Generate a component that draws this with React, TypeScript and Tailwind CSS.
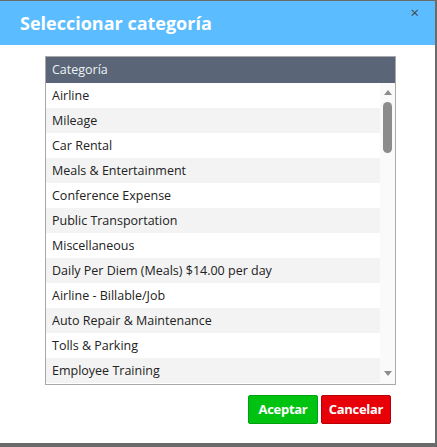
import React from "react";

const items = [
  "Airline",
  "Mileage",
  "Car Rental",
  "Meals & Entertainment",
  "Conference Expense",
  "Public Transportation",
  "Miscellaneous",
  "Daily Per Diem (Meals) $14.00 per day",
  "Airline - Billable/Job",
  "Auto Repair & Maintenance",
  "Tolls & Parking",
  "Employee Training",
];

export default function App() {
  return (
    <div
      className="w-[437px] h-[447px] bg-[#6b6b6b] pt-px overflow-hidden"
      style={{ fontFamily: '"Open Sans", "Noto Sans", sans-serif' }}
    >
      <div className="w-[435px] h-[442px] bg-white flex flex-col">
        <div className="h-[44px] bg-[#5bbdff] relative flex items-center pl-[20px]">
          <span className="text-white font-bold text-[18px] leading-none">
            Seleccionar categoría
          </span>
          <span className="absolute right-[16px] top-[4px] text-[#444] text-[15px] leading-none">
            ×
          </span>
        </div>
        <div className="pl-[45px] pt-[11px]">
          <div className="w-[351px] h-[329px] border border-[#a9a9a9] flex flex-col">
            <div className="h-[26px] bg-[#5a6577] text-[#eef2f6] text-[12.5px] flex items-center pl-[6px]">
              Categoría
            </div>
            <div className="flex flex-1">
              <div className="flex-1 flex flex-col">
                {items.map((it, i) => (
                  <div
                    key={it}
                    className={`h-[25px] shrink-0 flex items-center pl-[6px] pt-[2px] text-[12.5px] text-[#222] ${
                      i % 2 === 1 ? "bg-[#f3f3f3]" : "bg-white"
                    }`}
                  >
                    {it}
                  </div>
                ))}
              </div>
              <div className="w-[15px] bg-[#fafafa] flex flex-col items-center pt-[7px] pb-[4px]">
                <div className="w-0 h-0 border-l-[4.5px] border-r-[4.5px] border-b-[5px] border-l-transparent border-r-transparent border-b-[#8c8c8c]" />
                <div className="w-[9px] h-[51px] mt-[7px] rounded-full bg-[#8c8c8c]" />
                <div className="flex-1" />
                <div className="w-0 h-0 mb-[4px] border-l-[4.5px] border-r-[4.5px] border-t-[5px] border-l-transparent border-r-transparent border-t-[#8c8c8c]" />
              </div>
            </div>
          </div>
        </div>
        <div className="flex justify-end gap-[3px] pr-[44px] pt-[10px]">
          <button className="w-[70px] h-[29px] bg-[#00c311] border border-[#00a00e] rounded-[2px] text-white font-bold text-[13px] tracking-[-0.3px]">
            Aceptar
          </button>
          <button className="w-[70px] h-[29px] bg-[#e80008] border border-[#b80006] rounded-[2px] text-white font-bold text-[13px] tracking-[-0.3px]">
            Cancelar
          </button>
        </div>
      </div>
    </div>
  );
}
